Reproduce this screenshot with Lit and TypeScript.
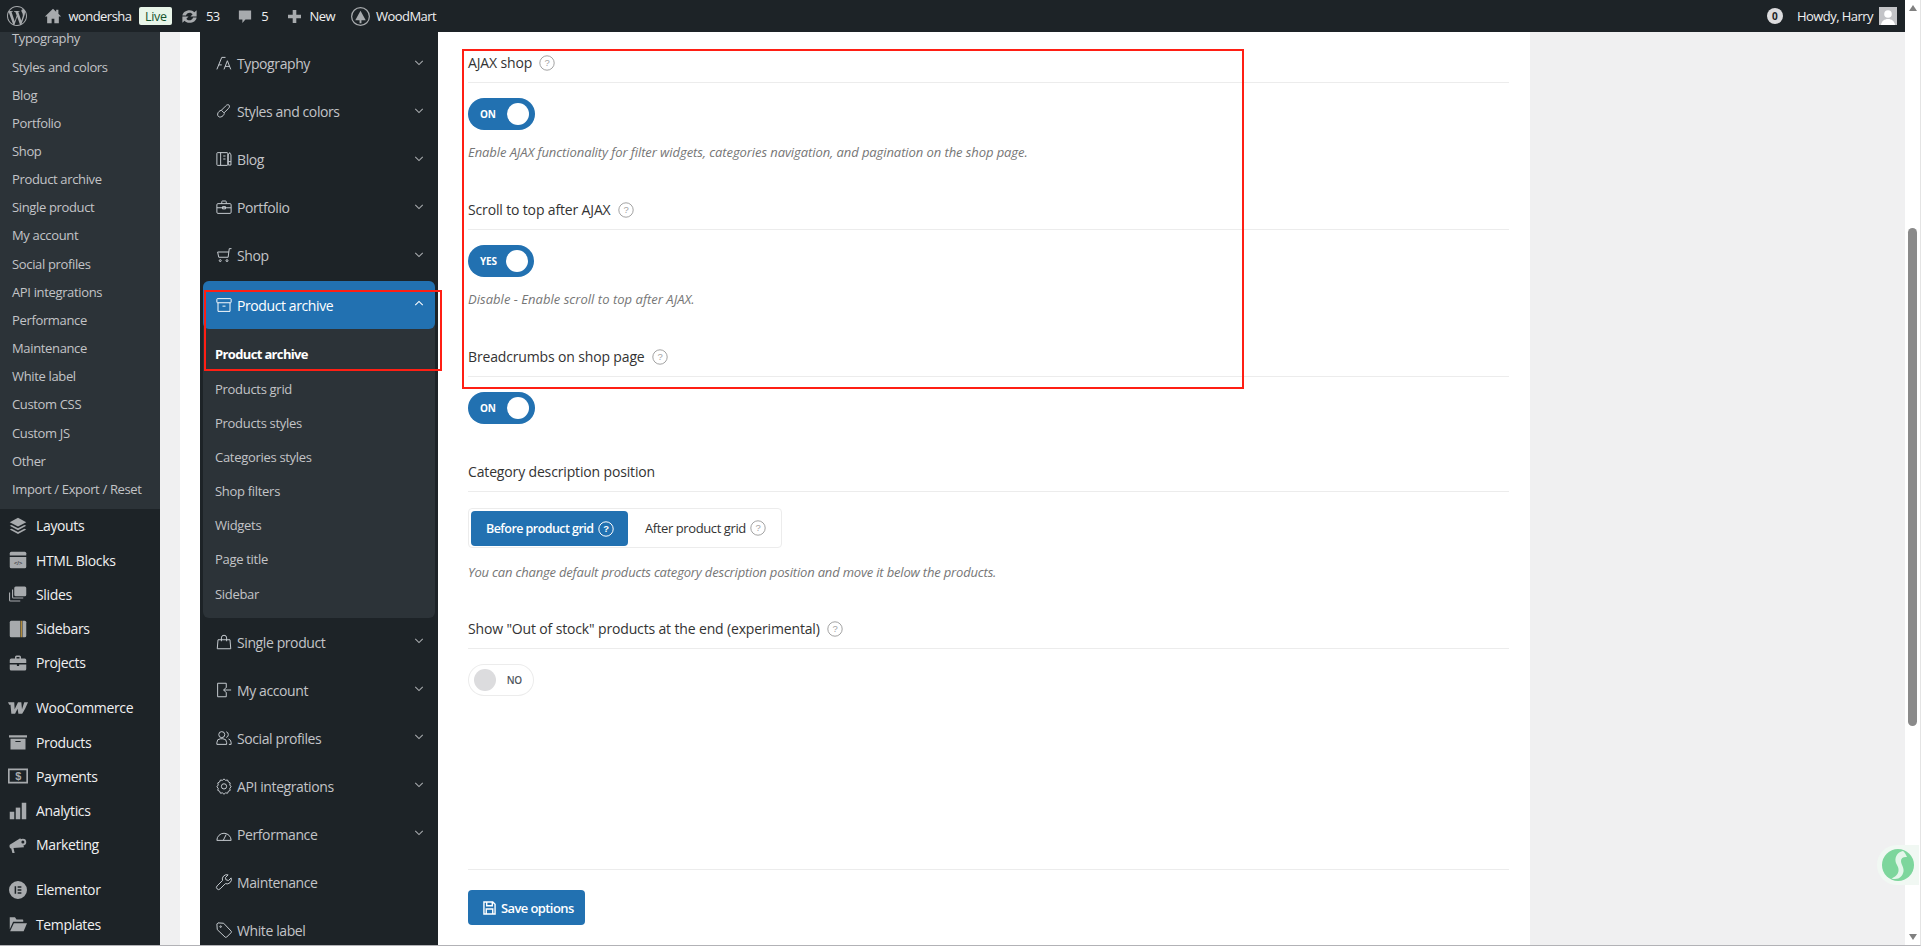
import { LitElement, html, css, svg } from "lit";
import { customElement } from "lit/decorators.js";

const wpLogo = svg`<path fill="currentColor" d="M12 0C5.4 0 0 5.4 0 12s5.4 12 12 12 12-5.400 12-12S18.600 0 12 0zM1.200 12c0-1.600.3-3 .9-4.400l5.200 14.200C3.700 20 1.200 16.300 1.200 12zm10.800 10.800c-1.100 0-2.100-.2-3-.4l3.200-9.400 3.300 9.100c0 .1 0 .1.100.1-1.100.4-2.300.6-3.600.6zm1.500-15.900c.6 0 1.200-.1 1.200-.1.600-.1.500-.9-.1-.9 0 0-1.700.1-2.900.1-1.100 0-2.800-.1-2.800-.1-.6 0-.7.900-.1.900 0 0 .5.1 1.100.1l1.700 4.600-2.300 7-3.900-11.600c.6 0 1.200-.1 1.200-.1.600-.1.500-.9-.1-.9 0 0-1.700.1-2.900.1h-.7C5.200 3.200 8.400 1.200 12 1.200c2.700 0 5.200 1 7.100 2.800h-.2c-1 0-1.700.9-1.700 1.800 0 .8.500 1.500 1 2.400.4.700.8 1.500.8 2.800 0 .9-.3 1.900-.8 3.300l-1 3.500-3.700-10.900zm4 14.500l3.300-9.500c.6-1.500.8-2.700.8-3.800 0-.4 0-.8-.1-1.100.8 1.500 1.300 3.200 1.300 5 0 4-2.200 7.500-5.300 9.400z"/>`;

const line: Record<string, unknown> = {
  type: svg`<path d="M2.500 20.500 9 4.500H14"/><path d="M5 14.500H9"/><path d="M12 20.500l4.500-11.500 4.500 11.500M13.500 16.500h6"/>`,
  brush: svg`<path d="M14 5.500c1.500-1.800 3.500-2.500 4.700-1.300s.6 3.300-1.200 4.800l-5.500 5.500-3.500-3.500z"/><path d="M8.500 11c-2.500.6-4.500 2.500-5 5-.4 2.500 1.500 4.500 4 4 2.500-.5 4.400-2.500 5-5"/>`,
  blog: svg`<rect x="2.500" y="3.500" width="14.500" height="17" rx="1"/><path d="M7.500 3.500v17M11 8h3M11 12h3"/><path d="M19.500 3.500l1.800 3v13.500h-3.600V6.500zM17.700 15.500h3.600"/>`,
  case: svg`<rect x="2.500" y="7.500" width="19" height="13" rx="1.500"/><path d="M9 7.500V5a1 1 0 0 1 1-1h4a1 1 0 0 1 1 1v2.500M2.500 13h19M10 11.500h4v3h-4z"/>`,
  cart: svg`<path d="M22 3.500h-3l-1.500 11.500H5L3.500 8H18.500"/><circle cx="7" cy="19.500" r="1.300"/><circle cx="16" cy="19.500" r="1.300"/>`,
  archive: svg`<rect x="2.500" y="3.500" width="19" height="5.500" rx=".8"/><path d="M4 9v11.500h16V9M10 13.500h4"/>`,
  bag: svg`<path d="M4 9h16l1 12H3z"/><path d="M8.500 11V6.500a3.500 3.500 0 0 1 7 0V11"/>`,
  login: svg`<path d="M15 8V3H3.500v18H15V16"/><path d="M21.500 12h-10M15.500 8 11.500 12l4 4"/>`,
  users: svg`<circle cx="9" cy="7.500" r="4"/><path d="M2.500 20.500v-2.500a5 5 0 0 1 5-5h3a5 5 0 0 1 5 5v2.500z"/><path d="M15 3.700a4 4 0 0 1 0 7.600M18 13.300a5 5 0 0 1 3.500 4.700v2.500H18.500"/>`,
  gear: svg`<path d="M12 2.500l2 1.900 2.800-.4 1 2.600 2.500 1.300-.6 2.700L21.500 13l-1.800 2.100.6 2.700-2.500 1.200-1 2.600-2.800-.4-2 1.800-2-1.800-2.800.4-1-2.600-2.500-1.200.6-2.700L2.500 13l1.800-2.400-.6-2.700L6.200 6.600l1-2.600 2.800.4z"/><circle cx="12" cy="12.500" r="3.500"/>`,
  gauge: svg`<path d="M2.500 20.500h19a9.500 9.500 0 1 0-19 0z"/><path d="M11 20.500 15 12.500"/>`,
  wrench: svg`<path d="M21.500 6.500 18 10 14.500 9 14 6l3.500-3.500a6 6 0 0 0-7.500 7.500L2.800 17.200a2.800 2.800 0 0 0 4 4l7-7a6 6 0 0 0 7.700-7.700z"/>`,
  tag: svg`<path d="M2.500 4 4 2.500l7.500.5L21.500 13.500a1.500 1.500 0 0 1 0 2L15.500 21.500a1.500 1.500 0 0 1-2 0L3 11.500z"/><circle cx="7.500" cy="7.500" r="1"/>`,
};

const solid: Record<string, unknown> = {
  layers: svg`<path d="M12 1 23 7l-11 5.500L1 7z"/><path d="M3.500 10.500 12 15l8.500-4.500 2.500 1.300L12 17.500 1 11.800z"/><path d="M3.500 15.500 12 20l8.500-4.500 2.500 1.300L12 22.500 1 16.800z"/>`,
  html: svg`<path d="M3 1h18a2 2 0 0 1 2 2v3H1V3a2 2 0 0 1 2-2z"/><path d="M1 8h22v13a2 2 0 0 1-2 2H3a2 2 0 0 1-2-2z"/><text x="12" y="18.500" text-anchor="middle" font-size="8" fill="#1d2327" font-family="Liberation Sans, sans-serif">&lt;/&gt;</text>`,
  slides: svg`<rect x="7" y="2" width="16" height="13" rx="2"/><path d="M4 6h1.500v10.500H19V18H6a2 2 0 0 1-2-2z"/><path d="M0 10h1.500v10.500H15V22H2a2 2 0 0 1-2-2z"/>`,
  sidebars: svg`<path d="M3 1h12v22H3a2 2 0 0 1-2-2V3a2 2 0 0 1 2-2z"/><rect x="15.500" y="1" width="2" height="22" fill="#b08a3c"/><path d="M18 1h3a2 2 0 0 1 2 2v18a2 2 0 0 1-2 2h-3z"/>`,
  brief: svg`<path d="M8 6V4a2 2 0 0 1 2-2h4a2 2 0 0 1 2 2v2h5a2 2 0 0 1 2 2v4H1V8a2 2 0 0 1 2-2zm2 0h4V4h-4z"/><path d="M1 14h9.500v2h3v-2H23v6a2 2 0 0 1-2 2H3a2 2 0 0 1-2-2z"/>`,
  woo: svg`<path d="M0 5h7.500l.5 8.500L12 5h4l.8 8.500L19.500 5H24c-2 5-4.500 10-7 14h-4.500l-1-6-3 6H4L3 8H1.500z"/>`,
  box: svg`<path d="M0 3h24v3H0z"/><path d="M2 7.500h20V22H2zM8.500 10.500v1.500h7v-1.500z" fill-rule="evenodd"/>`,
  pay: svg`<path fill-rule="evenodd" d="M0 3h24v18H0zM2 5v14h20V5z"/><text x="12" y="17" text-anchor="middle" font-size="13" font-weight="700" font-family="Liberation Sans, sans-serif">$</text>`,
  chart: svg`<rect x="1" y="13" width="6" height="10"/><rect x="9" y="7.500" width="6" height="15.500"/><rect x="17" y="1" width="6" height="22"/>`,
  mega: svg`<path d="M1 11.500 15 3c2 3 4 8 5 12L6 16l1.500 6.500h-3L3 16.500c-2 0-3-3-2-5z"/><circle cx="18.500" cy="8" r="4.500"/><circle cx="18.500" cy="8" r="2" fill="#1d2327"/>`,
  elem: svg`<path fill-rule="evenodd" d="M12 0a12 12 0 1 0 0 24 12 12 0 0 0 0-24zM7.500 7h2v10h-2zM11.500 7h5v2h-5zM11.500 11h5v2h-5zM11.500 15h5v2h-5z"/>`,
  folder: svg`<path d="M1 3h7l2 3h8a1 1 0 0 1 1 1v2H5.500L1 19z"/><path d="M6.500 11H24l-4.500 10.500H1.500z"/>`,
};

const lineIcon = (k: string) => html`<svg class="li" viewBox="0 0 24 24">${line[k]}</svg>`;
const solidIcon = (k: string) => html`<svg class="si si-${k}" viewBox="0 0 24 24">${solid[k]}</svg>`;
const chevron = (up = false) =>
  html`<svg class="chev" viewBox="0 0 12 8"><path d=${up ? "M1.500 6 6 1.500 10.500 6" : "M1.500 2 6 6.500 10.500 2"} /></svg>`;
const help = (light = false) =>
  html`<svg class="help ${light ? "light" : ""}" viewBox="0 0 16 16"><circle cx="8" cy="8" r="7.200"/><text x="8" y="11.300" text-anchor="middle" font-size="9.500" font-family="Liberation Sans, sans-serif">?</text></svg>`;

const subMenu = ["Typography","Styles and colors","Blog","Portfolio","Shop","Product archive","Single product","My account","Social profiles","API integrations","Performance","Maintenance","White label","Custom CSS","Custom JS","Other","Import / Export / Reset"];
const mainGroups: [string, string][][] = [
  [["layers","Layouts"],["html","HTML Blocks"],["slides","Slides"],["sidebars","Sidebars"],["brief","Projects"]],
  [["woo","WooCommerce"],["box","Products"],["pay","Payments"],["chart","Analytics"],["mega","Marketing"]],
  [["elem","Elementor"],["folder","Templates"]],
];
const navTop: [string, string][] = [["type","Typography"],["brush","Styles and colors"],["blog","Blog"],["case","Portfolio"],["cart","Shop"]];
const navSub = ["Products grid","Products styles","Categories styles","Shop filters","Widgets","Page title","Sidebar"];
const navBottom: [string, string, boolean][] = [["bag","Single product",true],["login","My account",true],["users","Social profiles",true],["gear","API integrations",true],["gauge","Performance",true],["wrench","Maintenance",false],["tag","White label",false]];

@customElement("app-root")
export class AppRoot extends LitElement {
  static styles = css`
    :host { display:flex; width:1921px; height:946px; box-sizing:border-box; overflow:hidden; position:relative;
      font-family:"Open Sans","Noto Sans",sans-serif; font-size:13px; background:#f0f0f1; border-bottom:1px solid #b2b2b6; border-right:1px solid #e4e4e4; }
    * { box-sizing:border-box; }
    .view { width:1905px; display:flex; flex-direction:column; height:100%; }
    .top { height:32px; flex:none; background:#1d2327; color:#f0f0f1; display:flex; align-items:center; font-size:13px; letter-spacing:-.55px; z-index:2; }
    .top svg { color:#a7aaad; fill:#a7aaad; display:block; }
    .wp { width:20px; height:20px; margin-left:7px; }
    .home { width:18px; height:18px; margin-left:17px; margin-right:6.500px; }
    .live { margin-left:8px; width:33px; height:18px; background:#e8f5e9; color:#14532d; border-radius:2px; display:flex; align-items:center; justify-content:center; font-size:12.500px; letter-spacing:-.3px; }
    .upd { width:19px; height:19px; margin-left:8px; margin-right:6.500px; }
    .cm { width:14px; height:15px; margin-left:18px; margin-right:9.700px; }
    .pl { width:15px; height:15px; margin-left:18.300px; margin-right:8px; }
    .wm { width:19px; height:19px; margin-left:16px; margin-right:6px; }
    .right { margin-left:auto; display:flex; align-items:center; }
    .zero { width:16px; height:16px; border-radius:50%; background:#dcdcde; color:#1d2327; font-size:10px; font-weight:700; display:flex; align-items:center; justify-content:center; margin-right:14px; letter-spacing:0; }
    .avatar { width:18px; height:18px; margin:0 8px 0 6px; background:#c3c4c7; overflow:hidden; fill:#fff !important; color:#fff !important; }
    .page { flex:1; min-height:0; display:flex; }
    .admin { width:160px; flex:none; background:#1d2327; overflow:hidden; }
    .adm-sub { background:#2c3338; margin-top:-7.700px; padding-bottom:5.700px; }
    .adm-sub div { height:28.170px; padding-left:12px; display:flex; align-items:center; color:#c3c4c7; font-size:13px; letter-spacing:-.35px; }
    .grp { margin-bottom:10.500px; }
    .adm-item { height:34.300px; display:flex; align-items:center; color:#f0f0f1; font-size:14px; letter-spacing:-.35px; }
    .adm-item .si { width:18px; height:18px; margin-left:9px; margin-right:9px; fill:#a7aaad; color:#a7aaad; flex:none; }
    .adm-item .si-woo, .adm-item .si-pay { width:20px; height:20px; margin-left:8px; margin-right:8px; }
    .gap { width:20px; flex:none; }
    .panel { width:1350px; flex:none; background:#fff; padding-left:20px; display:flex; min-height:0; }
    .nav { width:238px; flex:none; background:#1d2327; overflow:hidden; padding-top:7.500px; color:#c3c4c7; font-size:14px; letter-spacing:-.4px; }
    .nav-row { height:48px; display:flex; align-items:center; padding:0 13px 0 15px; }
    .nav-row .lbl { flex:1; margin-left:4px; }
    .li { width:18px; height:18px; fill:none; stroke:#c9ced3; stroke-width:1.300; flex:none; margin-top:-1px; }
    .chev { width:10px; height:7px; fill:none; stroke:#a7aaad; stroke-width:1.300; margin-top:-3px; margin-right:1px; }
    .block { margin:1.500px 3px 0; background:#2c3338; border-radius:6px; padding-bottom:7.500px; }
    .block .nav-row { background:#2271b1; border-radius:6px; color:#fff; padding:0 10px 0 12px; }
    .block .li { stroke:#fff; }
    .block .chev { stroke:#fff; }
    .sub-list { padding-top:8.400px; }
    .sub-list div { height:34.170px; display:flex; align-items:center; padding-left:12px; font-size:13px; letter-spacing:-.3px; }
    .sub-list .on { color:#fff; font-weight:700; letter-spacing:-.65px; }
    .content { flex:1; padding:20.500px 21px 20px 30px; display:flex; flex-direction:column; color:#3c434a; min-width:0; }
    .title { height:30px; padding-bottom:9px; border-bottom:1px solid #ececec; display:flex; align-items:center; font-size:14px; font-weight:500; letter-spacing:-.15px; color:#333; line-height:20px; }
    .help { width:16px; height:16px; margin-left:7px; fill:none; stroke:#a3a3a3; stroke-width:1; flex:none; }
    .help text { fill:#a3a3a3; stroke:none; }
    .help.light { stroke:#fff; }
    .help.light text { fill:#fff; }
    .toggle { display:flex; align-items:center; justify-content:space-between; height:32px; border-radius:16px; margin-top:15px; font-size:10px; font-weight:700; letter-spacing:-.2px; padding:0 6px 0 12px; background:#2271b1; color:#fff; width:67px; }
    .toggle.yes { width:66px; }
    .toggle i { width:22px; height:22px; border-radius:50%; background:#fff; display:block; }
    .toggle.off { background:#fff; color:#50575e; width:66px; box-shadow:inset 0 0 0 1px #ececec; padding:0 12px 0 6px; font-weight:600; }
    .toggle.off i { background:#dcdcde; }
    .desc { font-size:13px; font-style:italic; color:#767676; line-height:20px; letter-spacing:-.08px; }
    .d1 { margin-top:12.500px; }
    .d3 { margin-top:12.500px; letter-spacing:.03px; }
    .f2 { margin-top:37.800px; }
    .f3 { margin-top:38px; }
    .f5 { margin-top:37px; }
    .seg { margin-top:16px; width:314px; height:40px; border:1px solid #ececec; border-radius:4px; padding:2px; display:flex; font-size:13px; letter-spacing:-.4px; }
    .seg div { display:flex; align-items:center; }
    .seg .a { width:157px; height:35px; background:#2271b1; color:#fff; border-radius:4px; padding-left:15px; font-weight:600; font-size:12.500px; letter-spacing:-.55px; }
    .seg .a .help { margin-left:4px; }
    .seg .b { padding-left:17px; color:#333; }
    .seg .b .help { margin-left:4px; }
    .d2 { margin-top:13.500px; letter-spacing:-.18px; }
    .foot { margin-top:auto; border-top:1px solid #ececec; padding-top:20px; }
    .save { width:117px; height:35px; background:#2271b1; border-radius:4px; color:#fff; font-weight:600; font-size:13px; letter-spacing:-.6px; display:flex; align-items:center; padding-left:15px; gap:5px; }
    .save svg { width:13px; height:14px; fill:none; stroke:#fff; stroke-width:1.500; }
    .scroll { width:15px; flex:none; background:#fff; display:flex; flex-direction:column; align-items:center; position:relative; padding-top:5px; }
    .arrow-up { width:0; height:0; border:4.500px solid transparent; border-top:0; border-bottom:6px solid #808080; }
    .thumb { width:9px; height:498px; background:#8a8a8a; border-radius:4.500px; margin-top:217px; }
    .arrow-dn { width:0; height:0; border:4.500px solid transparent; border-bottom:0; border-top:6px solid #808080; margin-top:auto; margin-bottom:5px; }
    .rect { position:absolute; border:2px solid #ff1f14; pointer-events:none; z-index:3; }
    .r1 { left:204px; top:290px; width:238px; height:81px; }
    .r2 { left:462px; top:49px; width:782px; height:340px; }
    .halo { position:absolute; left:1877px; top:845px; width:42px; height:40px; background:#f1f8f3; border-radius:20px 0 0 20px; display:flex; align-items:center; justify-content:center; z-index:3; }
    .halo svg { width:32px; height:32px; display:block; }
  `;

  toggle(label: string, cls = "") {
    return cls === "off"
      ? html`<div class="toggle off"><i></i><span>${label}</span></div>`
      : html`<div class="toggle ${cls}"><span>${label}</span><i></i></div>`;
  }

  render() {
    return html`
      <div class="view">
        <div class="top">
          <svg class="wp" viewBox="0 0 24 24">${wpLogo}</svg>
          <svg class="home" viewBox="0 0 20 20"><path d="M10 2 1 10.500h2.500V18h5v-5h3v5h5v-7.500H19L16 7.600V3h-2.500v2.200z"/></svg>
          <span>wondersha</span>
          <span class="live">Live</span>
          <svg class="upd" viewBox="0 0 20 20"><path d="M10.200 3.300c2 0 3.700.9 4.900 2.300L17.500 3.500V10h-6.500l2.300-2.300c-.7-1-1.900-1.700-3.100-1.700-1.900 0-3.500 1.300-3.900 3H2.500c.5-3.300 3.500-5.700 7.700-5.700zM2.500 16.500V10H9l-2.300 2.300c.7 1 1.900 1.700 3.100 1.700 1.900 0 3.500-1.300 3.900-3h3.800c-.5 3.300-3.500 5.700-7.700 5.700-2 0-3.700-.9-4.900-2.300z"/></svg>
          <span>53</span>
          <svg class="cm" viewBox="0 0 16 16"><path d="M1 1h14v10.500H8.500L5 15.500v-4H1z"/></svg>
          <span>5</span>
          <svg class="pl" viewBox="0 0 15 15"><path d="M5.700 1h3.600v4.700H14v3.600H9.300V14H5.700V9.300H1V5.700h4.700z"/></svg>
          <span>New</span>
          <svg class="wm" viewBox="0 0 20 20"><path fill-rule="evenodd" d="M10 0a10 10 0 1 0 0 20 10 10 0 0 0 0-20zm0 1.300a8.700 8.700 0 1 1 0 17.400 8.700 8.700 0 0 1 0-17.400z"/><path d="M10 4l5.500 10H11v3H9v-3H4.500z"/></svg>
          <span>WoodMart</span>
          <div class="right">
            <span class="zero">0</span>
            <span>Howdy, Harry</span>
            <svg class="avatar" viewBox="0 0 18 18"><circle cx="9" cy="7" r="3.800"/><path d="M2 18c.5-4 3.500-6 7-6s6.500 2 7 6z"/></svg>
          </div>
        </div>
        <div class="page">
          <div class="admin">
            <div class="adm-sub">${subMenu.map((s) => html`<div>${s}</div>`)}</div>
            ${mainGroups.map((g) => html`<div class="grp">${g.map(([i, t]) => html`<div class="adm-item">${solidIcon(i)}<span>${t}</span></div>`)}</div>`)}
          </div>
          <div class="gap"></div>
          <div class="panel">
            <div class="nav">
              ${navTop.map(([i, t]) => html`<div class="nav-row">${lineIcon(i)}<span class="lbl">${t}</span>${chevron()}</div>`)}
              <div class="block">
                <div class="nav-row">${lineIcon("archive")}<span class="lbl">Product archive</span>${chevron(true)}</div>
                <div class="sub-list">
                  <div class="on">Product archive</div>
                  ${navSub.map((s) => html`<div>${s}</div>`)}
                </div>
              </div>
              ${navBottom.map(([i, t, c]) => html`<div class="nav-row">${lineIcon(i)}<span class="lbl">${t}</span>${c ? chevron() : ""}</div>`)}
            </div>
            <div class="content">
              <div class="title">AJAX shop${help()}</div>
              ${this.toggle("ON")}
              <div class="desc d1">Enable AJAX functionality for filter widgets, categories navigation, and pagination on the shop page.</div>
              <div class="title f2">Scroll to top after AJAX${help()}</div>
              ${this.toggle("YES", "yes")}
              <div class="desc d3">Disable - Enable scroll to top after AJAX.</div>
              <div class="title f2">Breadcrumbs on shop page${help()}</div>
              ${this.toggle("ON")}
              <div class="title f3">Category description position</div>
              <div class="seg">
                <div class="a">Before product grid${help(true)}</div>
                <div class="b">After product grid${help()}</div>
              </div>
              <div class="desc d2">You can change default products category description position and move it below the products.</div>
              <div class="title f5">Show "Out of stock" products at the end (experimental)${help()}</div>
              ${this.toggle("NO", "off")}
              <div class="foot">
                <div class="save">
                  <svg viewBox="0 0 14 15"><path d="M1 1h9.500L13 3.500V14H1z"/><path d="M4 1v4h6V1M3.500 14V8.500h7V14"/></svg>
                  <span>Save options</span>
                </div>
              </div>
            </div>
          </div>
        </div>
      </div>
      <div class="scroll">
        <div class="arrow-up"></div>
        <div class="thumb"></div>
        <div class="arrow-dn"></div>
      </div>
      <div class="rect r1"></div>
      <div class="rect r2"></div>
      <div class="halo">
        <svg viewBox="0 0 32 32"><circle cx="16" cy="16" r="16" fill="#7dd69c"/><path d="M21 2c-5 1-8 5-7.500 10 .4 4 3.500 5 3 10-.3 3-3 6-7 7.500 7 2 11-2 12-7 .7-4-2.500-7-2.500-10.500 0-3 2.500-4.500 6-4-1-2.500-2.500-5-4-6z" fill="#e4f6ea"/></svg>
      </div>
    `;
  }
}
